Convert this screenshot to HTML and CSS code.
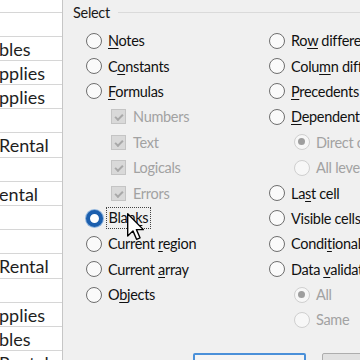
FILE: index.html
```html
<!DOCTYPE html>
<html lang="en">
<head>
    <meta charset="UTF-8">
    <meta name="viewport" content="width=device-width, initial-scale=1.0">
    <title>Go To Special</title>
    <link rel="stylesheet" href="styles.css">
</head>
<body>
    <div class="screen">
        <!-- Spreadsheet column behind the dialog -->
        <div class="sheet">
            <div class="cell first"></div>
            <div class="cell"></div>
            <div class="cell">bles</div>
            <div class="cell">pplies</div>
            <div class="cell">pplies</div>
            <div class="cell"></div>
            <div class="cell">Rental</div>
            <div class="cell"></div>
            <div class="cell">ental</div>
            <div class="cell"></div>
            <div class="cell"></div>
            <div class="cell">Rental</div>
            <div class="cell"></div>
            <div class="cell">pplies</div>
            <div class="cell">bles</div>
            <div class="cell">Rental</div>
        </div>

        <!-- Go To Special dialog -->
        <div class="dialog">
            <div class="group-title"><span>Select</span></div>

            <div class="options">
                <div class="col">
                    <div class="opt"><span class="radio"></span><span class="label"><u>N</u>otes</span></div>
                    <div class="opt"><span class="radio"></span><span class="label">C<u>o</u>nstants</span></div>
                    <div class="opt"><span class="radio"></span><span class="label"><u>F</u>ormulas</span></div>
                    <div class="opt sub"><span class="check"></span><span class="label off">Numbers</span></div>
                    <div class="opt sub"><span class="check"></span><span class="label off">Text</span></div>
                    <div class="opt sub"><span class="check"></span><span class="label off">Logicals</span></div>
                    <div class="opt sub"><span class="check"></span><span class="label off">Errors</span></div>
                    <div class="opt"><span class="radio on"></span><span class="label focus">Blan<u>k</u>s</span></div>
                    <div class="opt"><span class="radio"></span><span class="label">Current <u>r</u>egion</span></div>
                    <div class="opt"><span class="radio"></span><span class="label">Current <u>a</u>rray</span></div>
                    <div class="opt"><span class="radio"></span><span class="label">O<u>b</u>jects</span></div>
                </div>
                <div class="col">
                    <div class="opt"><span class="radio"></span><span class="label">Ro<u>w</u> differences</span></div>
                    <div class="opt"><span class="radio"></span><span class="label">Colu<u>m</u>n differences</span></div>
                    <div class="opt"><span class="radio"></span><span class="label"><u>P</u>recedents</span></div>
                    <div class="opt"><span class="radio"></span><span class="label"><u>D</u>ependents</span></div>
                    <div class="opt sub"><span class="radio dim dot"></span><span class="label off">Direct only</span></div>
                    <div class="opt sub"><span class="radio dim"></span><span class="label off">All levels</span></div>
                    <div class="opt"><span class="radio"></span><span class="label">La<u>s</u>t cell</span></div>
                    <div class="opt"><span class="radio"></span><span class="label">Visible cells onl<u>y</u></span></div>
                    <div class="opt"><span class="radio"></span><span class="label">Condi<u>t</u>ional formats</span></div>
                    <div class="opt"><span class="radio"></span><span class="label">Data <u>v</u>alidation</span></div>
                    <div class="opt sub"><span class="radio dim dot"></span><span class="label off">All</span></div>
                    <div class="opt sub"><span class="radio dim"></span><span class="label off">Same</span></div>
                </div>
            </div>

            <div class="buttons">
                <div class="btn default">OK</div>
                <div class="btn">Cancel</div>
            </div>
        </div>

        <!-- Mouse pointer over "Blanks" -->
        <svg class="pointer" width="18" height="28" viewBox="0 0 13 20">
            <path d="M0.5 0.5 L0.5 16.5 L4.3 12.8 L6.9 18.9 L9.4 17.8 L6.8 11.9 L11.8 11.9 Z" fill="#fff" stroke="#000" stroke-width="1" stroke-linejoin="round"/>
        </svg>
    </div>
</body>
</html>
```

FILE: styles.css
```css
/* General Styles */
body {
    margin: 0;
    padding: 0;
    background: #fff;
}

.screen {
    position: relative;
    width: 360px;
    height: 360px;
    overflow: hidden;
    display: flex;
}

/* Spreadsheet Column */
.sheet {
    width: 62px;
    flex: none;
    background: #fff;
    border-right: 1px solid #c6c6c6;
    font-family: Lato, "Open Sans", sans-serif;
    font-size: 18px;
    color: #1e1e1e;
}

.cell {
    height: 24.2px;
    box-sizing: border-box;
    border-bottom: 1px solid #d6d6d6;
    line-height: 25px;
    white-space: nowrap;
    overflow: hidden;
    margin-left: -1px;
}

.cell.first {
    height: 12.5px;
}

/* Dialog */
.dialog {
    flex: 1;
    min-width: 0;
    background: #f0f0f0;
    font-family: Lato, "Noto Sans", sans-serif;
    font-size: 14.5px;
    letter-spacing: -0.3px;
    color: #111;
    display: flex;
    flex-direction: column;
}

.group-title {
    display: flex;
    align-items: center;
    height: 25px;
    padding-left: 10px;
}

.group-title span {
    line-height: 25px;
    color: #1a1a1a;
}

.group-title::after {
    content: "";
    flex: 1;
    height: 1px;
    margin-left: 8px;
    background: #dadada;
}

.options {
    display: flex;
    padding-left: 23px;
    margin-top: 3px;
}

.col {
    flex: none;
    width: 183px;
    white-space: nowrap;
}

.opt {
    height: 25.4px;
    display: flex;
    align-items: center;
    gap: 6px;
}

.opt.sub {
    padding-left: 25px;
}

.label u {
    text-decoration-thickness: 1px;
    text-underline-offset: 2px;
}

.label.off {
    color: #a2a2a2;
}

.label.focus {
    margin-left: -2px;
    padding: 1px 2px 2px;
    outline: 1px dotted #444;
    outline-offset: 0;
}

/* Radio buttons */
.radio {
    width: 16px;
    height: 16px;
    flex: none;
    box-sizing: border-box;
    border: 1.5px solid #6e6e6e;
    border-radius: 50%;
    background: #fafafa;
    position: relative;
}

.radio.on {
    width: 17px;
    height: 17px;
    margin-left: -0.5px;
    border: 4px solid #1c5fae;
    background: #fff;
    box-shadow: 0 0 0 1px #8fb4dd;
}

.radio.dim {
    border: 1.5px solid #cfcfcf;
    background: #f7f7f7;
}

.radio.dot::after {
    content: "";
    position: absolute;
    left: 3px;
    top: 3px;
    width: 7px;
    height: 7px;
    border-radius: 50%;
    background: #9e9e9e;
}

/* Disabled checked checkbox */
.check {
    width: 15px;
    height: 15px;
    flex: none;
    box-sizing: border-box;
    border: 1px solid #c4c4c4;
    background: #d9d9d9;
    position: relative;
    margin-right: 1px;
}

.check::after {
    content: "";
    position: absolute;
    left: 3px;
    top: 1px;
    width: 6px;
    height: 3px;
    border-left: 2px solid #a8a8a8;
    border-bottom: 2px solid #a8a8a8;
    transform: translate(0, 3px) rotate(-45deg);
}

/* Buttons */
.buttons {
    display: flex;
    gap: 16px;
    padding-left: 130px;
    margin-top: 20px;
}

.btn {
    width: 113px;
    height: 26px;
    flex: none;
    box-sizing: border-box;
    border: 1px solid #adadad;
    border-radius: 2px;
    background: #e1e1e1;
    text-align: center;
    line-height: 24px;
}

.btn.default {
    border: 2px solid #4a90d9;
    background: #f4f4f4;
}

/* Mouse pointer */
.pointer {
    position: absolute;
    left: 127px;
    top: 213px;
}
```
